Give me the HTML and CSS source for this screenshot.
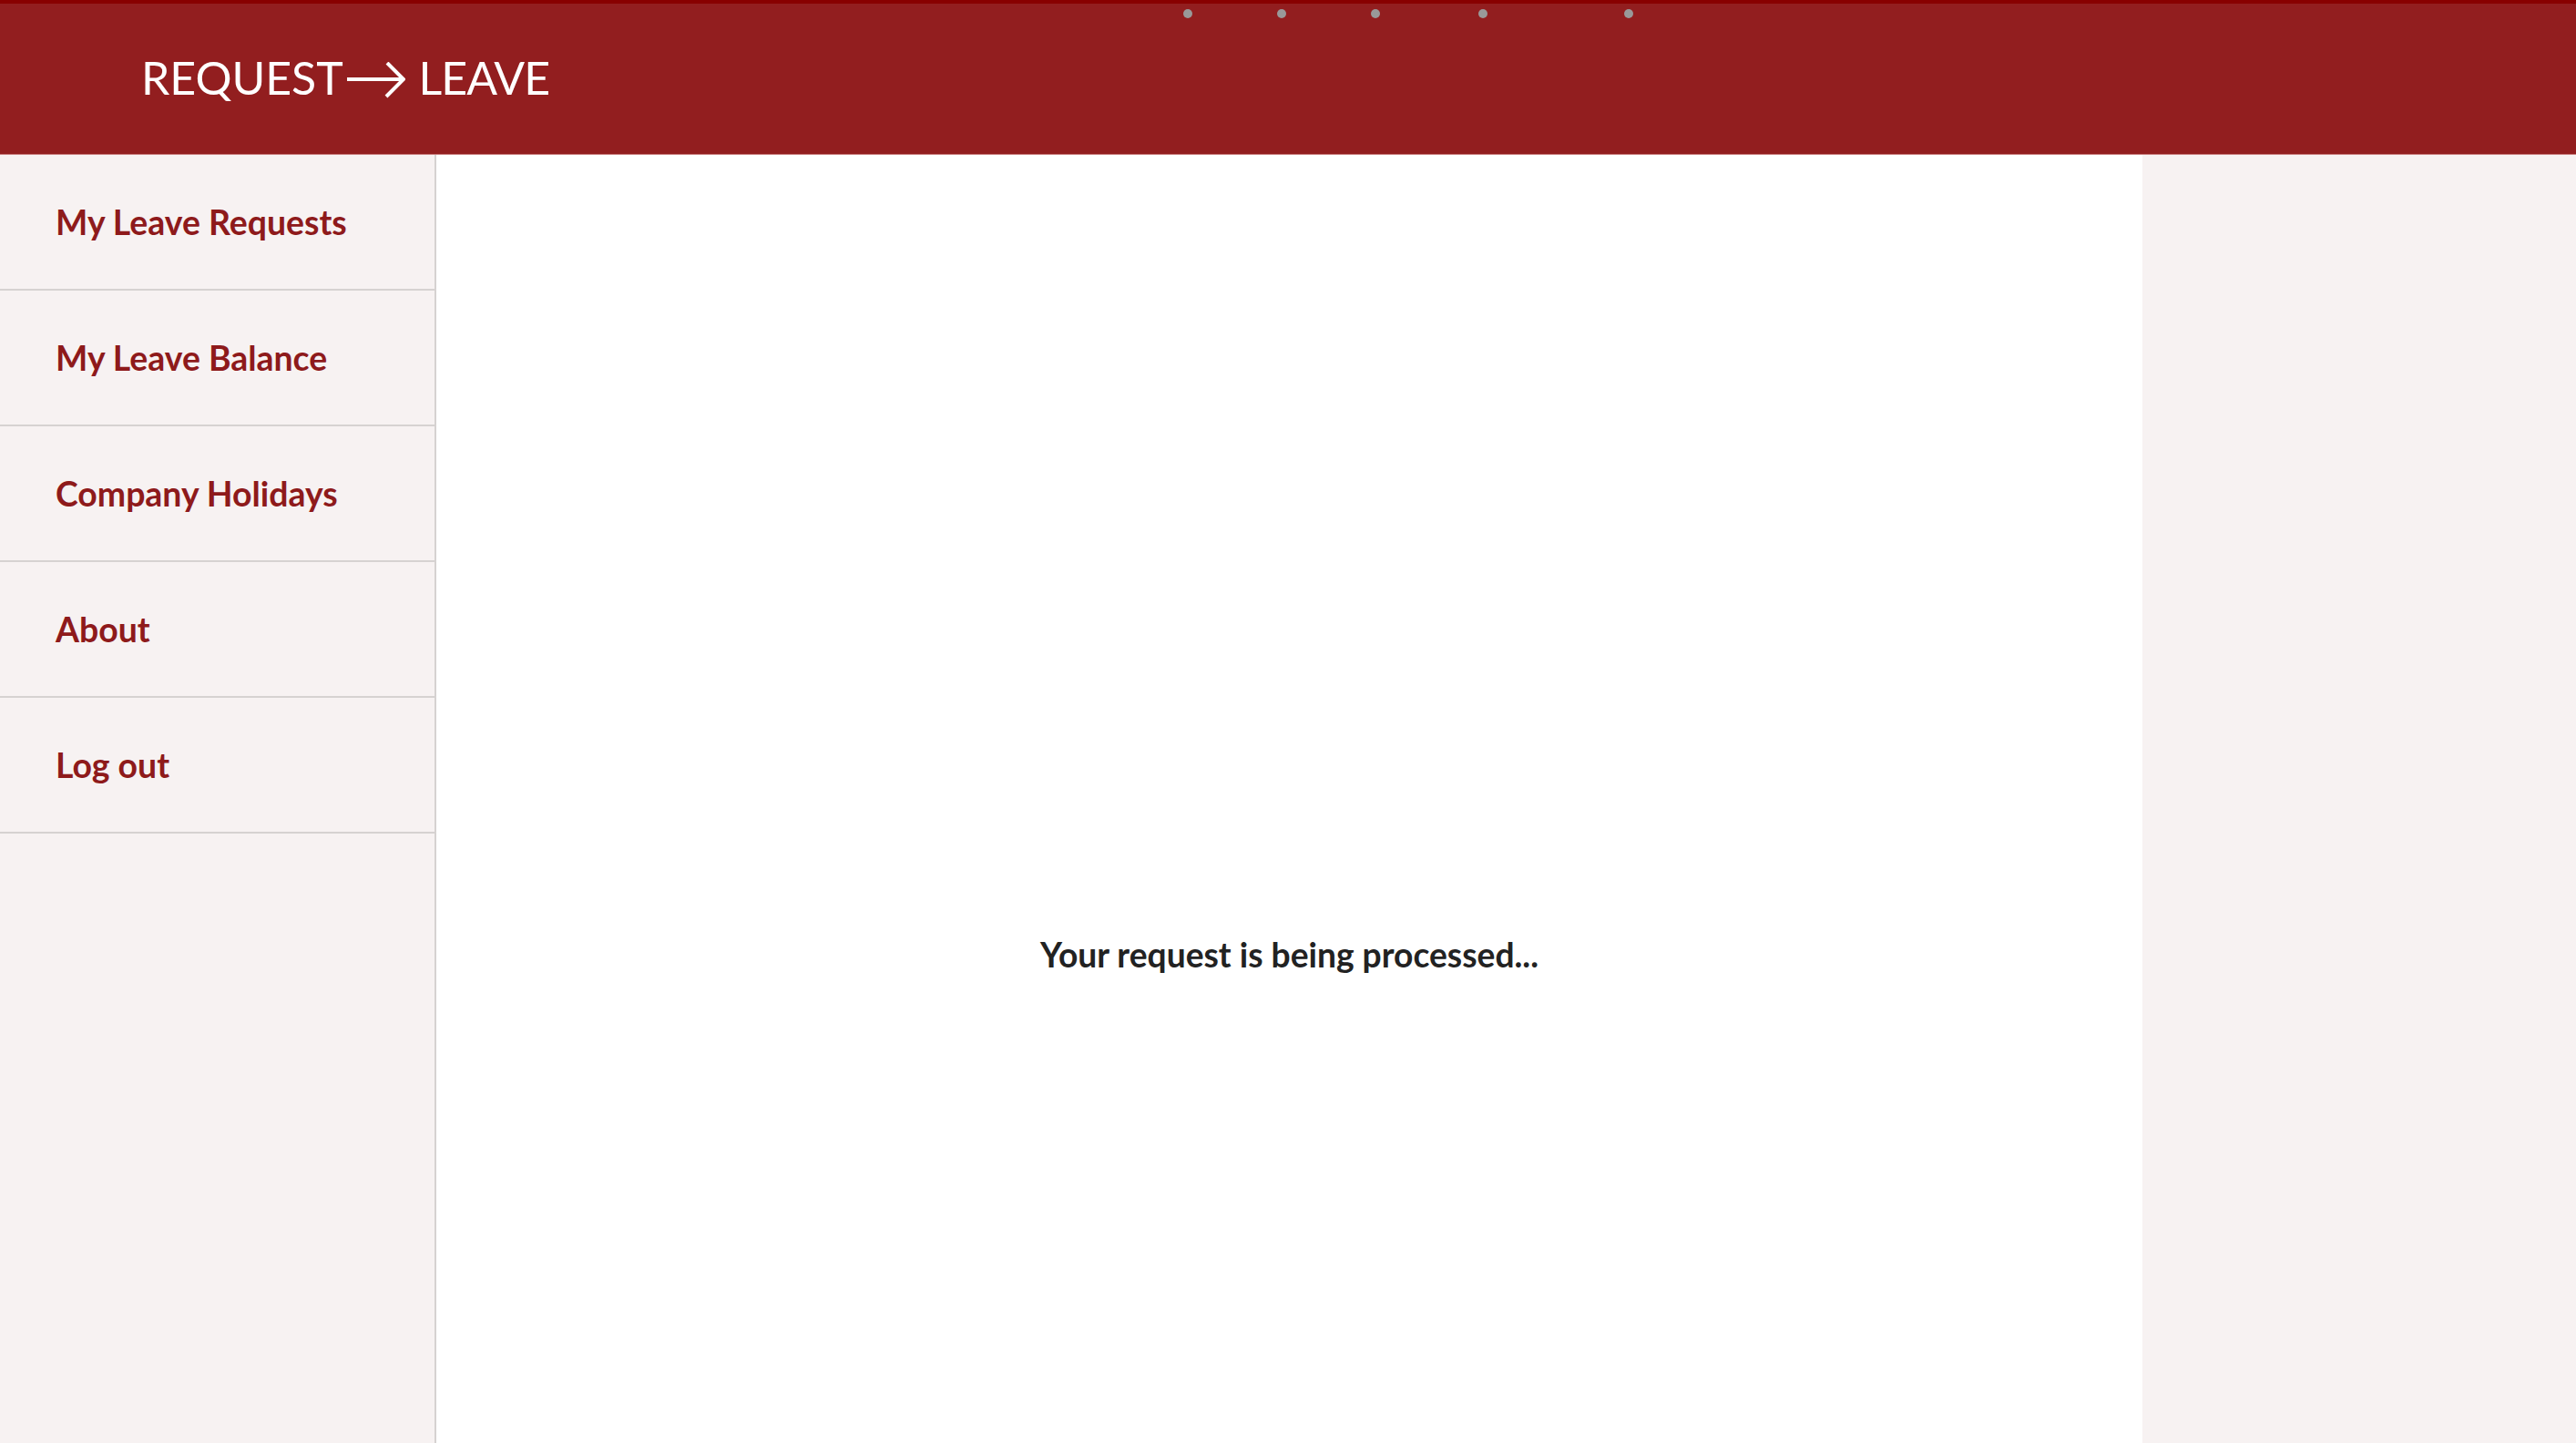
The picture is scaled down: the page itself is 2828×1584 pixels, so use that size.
FILE: index.html
```html
<!DOCTYPE html>
<html lang="en">
<head>
<meta charset="utf-8">
<title>Request Leave</title>
<link rel="stylesheet" href="styles.css">
</head>
<body>
<header class="topbar">
  <div class="brand">REQUEST<svg class="arrow" viewBox="0 0 64 40" width="64" height="40" aria-hidden="true"><path d="M0 19H61M44 1L62 19L43 38" fill="none" stroke="#fff" stroke-width="4"/></svg> <span class="brand-leave">LEAVE</span></div>
  <div class="dots">
    <span class="dot d1"></span>
    <span class="dot d2"></span>
    <span class="dot d3"></span>
    <span class="dot d4"></span>
    <span class="dot d5"></span>
  </div>
</header>
<div class="layout">
  <nav class="sidebar">
    <a class="nav-item" href="#">My Leave Requests</a>
    <a class="nav-item" href="#">My Leave Balance</a>
    <a class="nav-item" href="#">Company Holidays</a>
    <a class="nav-item" href="#">About</a>
    <a class="nav-item" href="#">Log out</a>
  </nav>
  <main class="content">
    <p class="status">Your request is being processed...</p>
  </main>
  <aside class="right"></aside>
</div>
</body>
</html>
```
FILE: styles.css
```css
* { box-sizing: border-box; }
html, body {
  margin: 0;
  padding: 0;
  height: 100%;
}
body {
  background: #f7f2f2;
  font-family: Lato, "Liberation Sans", sans-serif;
  display: flex;
  flex-direction: column;
  overflow: hidden;
}
.topbar {
  position: relative;
  height: 170px;
  flex: none;
  background: #921e1f;
  border-top: 4px solid #880000;
  border-bottom: 1px solid #c98080;
  display: flex;
  align-items: center;
  padding-left: 155px;
}
.brand {
  color: #fff;
  font-size: 50px;
  font-weight: 400;
  margin-top: -4px;
  white-space: nowrap;
}
.arrow {
  display: inline-block;
  vertical-align: -4px;
  margin-left: 4px;
  margin-right: 2px;
}
.brand-leave {
  letter-spacing: -1px;
}
.dots {
  position: absolute;
  top: 6px;
  left: 0;
  right: 0;
  height: 10px;
}
.dot {
  position: absolute;
  top: 0;
  width: 10px;
  height: 10px;
  border-radius: 50%;
  background: #999;
}
.d1 { left: 1299px; }
.d2 { left: 1402px; }
.d3 { left: 1505px; }
.d4 { left: 1623px; }
.d5 { left: 1783px; }
.layout {
  flex: 1;
  display: flex;
  min-height: 0;
}
.sidebar {
  width: 479px;
  flex: none;
  background: #f7f2f2;
  border-right: 2px solid #d6d2d1;
  display: flex;
  flex-direction: column;
}
.nav-item {
  height: 149px;
  display: flex;
  align-items: center;
  padding-left: 61px;
  border-bottom: 2px solid #d6d2d1;
  color: #8e1a1b;
  font-weight: 700;
  font-size: 37.4px;
  text-decoration: none;
}
.content {
  width: 1873px;
  flex: none;
  background: #fff;
  display: flex;
  justify-content: center;
  padding-top: 853px;
}
.status {
  margin: 0;
  color: #222;
  font-weight: 700;
  font-size: 37.2px;
  line-height: 50px;
}
.right {
  flex: 1;
  background: #f7f2f2;
}
```
